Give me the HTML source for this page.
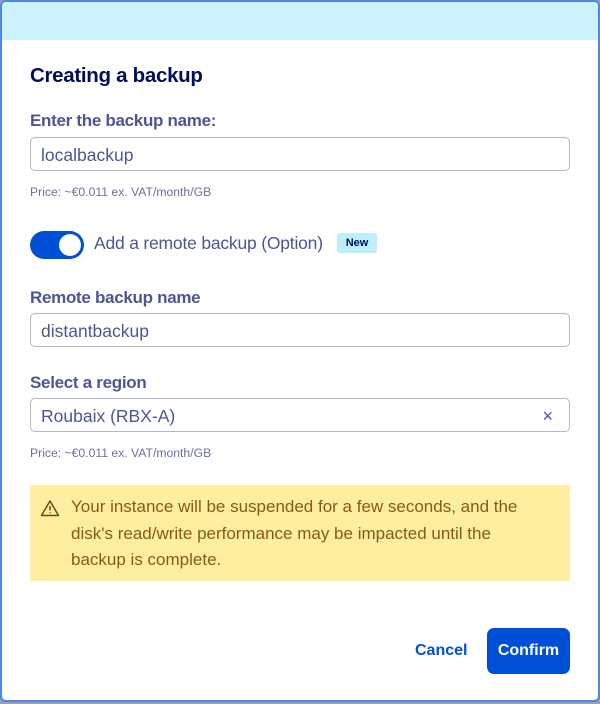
<!DOCTYPE html><html><head><style>
body{margin:0;width:600px;height:704px;background:#9aa0a8;font-family:"Liberation Sans",sans-serif;overflow:hidden;position:relative}
.m{position:absolute;left:0;top:0;width:596px;height:698px;border:2px solid #4d86e6;border-radius:6px;background:#fff;overflow:hidden}
.hd{height:38px;background:#ccf3fd}
.a{position:absolute}
h1{position:absolute;left:28px;top:62px;margin:0;font-size:20.5px;color:#000e5c;font-weight:bold;letter-spacing:-.3px}
.l{position:absolute;left:28px;font-size:17px;color:#4d5693;font-weight:bold;letter-spacing:-.3px}
.in{position:absolute;left:28px;height:34px;border:1px solid #b3b7c8;border-radius:5px;font-size:17.5px;color:#4d5693;line-height:34px;padding-left:10px;box-sizing:border-box;width:540px}
.p{position:absolute;left:28px;font-size:12.2px;color:#6a7199}
</style></head><body><div class="m">
<div class="hd"></div>
<h1>Creating a backup</h1>
<div class="l" style="top:109px">Enter the backup name:</div>
<div class="in" style="top:135px">localbackup</div>
<div class="p" style="top:183px">Price: ~€0.011 ex. VAT/month/GB</div>
<div class="a" style="left:28px;top:229px;width:54px;height:28px;border-radius:14px;background:#0050d7"></div>
<div class="a" style="left:57px;top:232px;width:22px;height:22px;border-radius:50%;background:#fff"></div>
<div class="a" style="left:92px;top:231px;font-size:17.5px;color:#4d5693;letter-spacing:-.2px">Add a remote backup (Option)</div>
<div class="a" style="left:335px;top:231px;width:40px;height:20px;background:#bdeefc;border-radius:3px;font-size:11px;font-weight:bold;color:#000e5c;text-align:center;line-height:20px">New</div>
<div class="l" style="top:286px">Remote backup name</div>
<div class="in" style="top:311px">distantbackup</div>
<div class="l" style="top:371px">Select a region</div>
<div class="in" style="top:396px">Roubaix (RBX-A)<span style="position:absolute;right:16px;top:0;font-size:18px;color:#4d5693">×</span></div>
<div class="p" style="top:444px">Price: ~€0.011 ex. VAT/month/GB</div>
<div class="a" style="left:28px;top:483px;width:540px;height:96px;background:#fdef9f"></div>
<svg class="a" style="left:38px;top:497px" width="20" height="18" viewBox="0 0 20 18"><path d="M10 2L18.5 16.5H1.5Z" fill="none" stroke="#6b4a10" stroke-width="1.5" stroke-linejoin="round"/><path d="M10 7v4.5M10 13.2v1" stroke="#6b4a10" stroke-width="1.5"/></svg>
<div class="a" style="left:69px;top:492px;white-space:nowrap;font-size:17px;line-height:26.5px;color:#8a5a10;letter-spacing:0">Your instance will be suspended for a few seconds, and the<br>disk's read/write performance may be impacted until the<br>backup is complete.</div>
<div class="a" style="left:413px;top:640px;font-size:16px;font-weight:bold;color:#0050d7">Cancel</div>
<div class="a" style="left:485px;top:626px;width:83px;height:46px;border-radius:7px;background:#0050d7;color:#fff;font-size:16px;font-weight:bold;text-align:center;line-height:46px">Confirm</div>
</div></body></html>
